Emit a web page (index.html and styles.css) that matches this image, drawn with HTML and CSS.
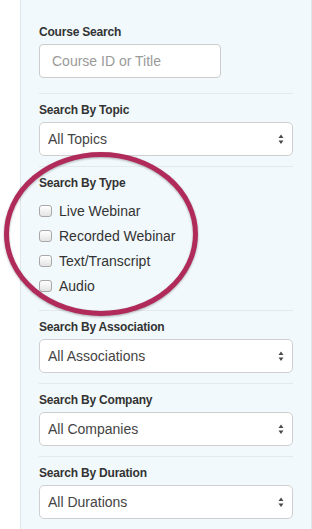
FILE: index.html
```html
<!DOCTYPE html>
<html>
<head>
<meta charset="utf-8">
<link rel="stylesheet" href="styles.css">
</head>
<body>
<div class="panel">
  <div class="section first">
    <div class="label">Course Search</div>
    <input class="text-input" type="text" placeholder="Course ID or Title">
  </div>
  <div class="section">
    <div class="label">Search By Topic</div>
    <div class="select"><span>All Topics</span>
      <svg class="arrows" width="6" height="11" viewBox="0 0 6 11"><path d="M3 0.5 L5.5 4 L0.5 4 Z M0.5 6.5 L5.5 6.5 L3 10 Z" fill="#4a4a4a"/></svg>
    </div>
  </div>
  <div class="section checks">
    <div class="label">Search By Type</div>
    <ul class="check-list">
      <li><span class="box"></span>Live Webinar</li>
      <li><span class="box"></span>Recorded Webinar</li>
      <li><span class="box"></span>Text/Transcript</li>
      <li><span class="box"></span>Audio</li>
    </ul>
  </div>
  <div class="section">
    <div class="label">Search By Association</div>
    <div class="select"><span>All Associations</span>
      <svg class="arrows" width="6" height="11" viewBox="0 0 6 11"><path d="M3 0.5 L5.5 4 L0.5 4 Z M0.5 6.5 L5.5 6.5 L3 10 Z" fill="#4a4a4a"/></svg>
    </div>
  </div>
  <div class="section">
    <div class="label">Search By Company</div>
    <div class="select"><span>All Companies</span>
      <svg class="arrows" width="6" height="11" viewBox="0 0 6 11"><path d="M3 0.5 L5.5 4 L0.5 4 Z M0.5 6.5 L5.5 6.5 L3 10 Z" fill="#4a4a4a"/></svg>
    </div>
  </div>
  <div class="section">
    <div class="label">Search By Duration</div>
    <div class="select"><span>All Durations</span>
      <svg class="arrows" width="6" height="11" viewBox="0 0 6 11"><path d="M3 0.5 L5.5 4 L0.5 4 Z M0.5 6.5 L5.5 6.5 L3 10 Z" fill="#4a4a4a"/></svg>
    </div>
  </div>
</div>
<svg class="annotation" width="312" height="529" viewBox="0 0 312 529">
  <ellipse cx="101" cy="234" rx="94.5" ry="79.5" fill="none" stroke="#b02a5a" stroke-width="5"/>
</svg>
</body>
</html>
```

FILE: styles.css
```css
html, body {
  margin: 0;
  padding: 0;
  background: #ffffff;
  overflow: hidden;
}
body {
  position: relative;
  width: 312px;
  height: 529px;
  font-family: "Liberation Sans", Arial, sans-serif;
  color: #333;
}
.panel {
  margin-left: 20px;
  width: 292px;
  box-sizing: border-box;
  min-height: 529px;
  background: #f2f9fc;
  border-left: 1px solid #dde6ea;
  border-right: 1px solid #dde6ea;
  padding: 0 18px;
}
.section {
  border-top: 1px solid #e3e9ec;
  padding-top: 8px;
  padding-bottom: 10px;
}
.section.first {
  border-top: none;
  padding-top: 24px;
  padding-bottom: 15px;
}
.section.checks {
  padding-bottom: 12px;
}
.label {
  font-size: 12px;
  line-height: 17px;
  font-weight: bold;
  letter-spacing: -0.2px;
  color: #333;
  margin-bottom: 3px;
}
.text-input {
  display: block;
  box-sizing: border-box;
  width: 182px;
  height: 34px;
  margin: 0;
  padding: 0 12px;
  border: 1px solid #cccccc;
  border-radius: 4px;
  background: #fff;
  font-family: "Liberation Sans", Arial, sans-serif;
  font-size: 14px;
  color: #555;
  outline: none;
}
.text-input::placeholder {
  color: #9a9a9a;
}
.select {
  box-sizing: border-box;
  height: 34px;
  border: 1px solid #cfcfcf;
  border-radius: 5px;
  background: #fff;
  display: flex;
  align-items: center;
  justify-content: space-between;
  padding: 0 8px 0 8px;
  font-size: 14px;
  color: #444;
}
.arrows {
  display: block;
}
.check-list {
  list-style: none;
  margin: 0;
  padding: 3px 0 0 0;
}
.check-list li {
  height: 25px;
  display: flex;
  align-items: center;
  font-size: 14px;
  color: #333;
}
.box {
  display: inline-block;
  box-sizing: border-box;
  width: 13px;
  height: 12px;
  border: 1px solid #a8a8a8;
  border-radius: 3px;
  background: linear-gradient(#ffffff, #e4e4e4);
  margin-right: 7px;
  margin-top: 1px;
}
.annotation {
  position: absolute;
  top: 0;
  left: 0;
  pointer-events: none;
  filter: drop-shadow(0 1px 1px rgba(0, 0, 0, 0.3));
}
```
